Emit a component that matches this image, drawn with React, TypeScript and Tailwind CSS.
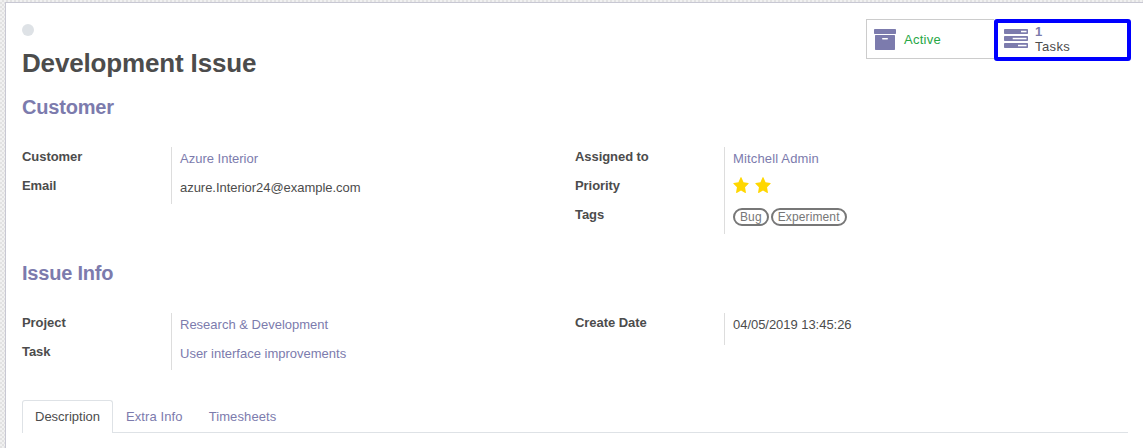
import type { ReactNode } from "react";

function ArchiveIcon() {
  return (
    <svg width="22" height="21" viewBox="0 0 22 21" fill="#7c7bad">
      <rect x="0" y="0" width="22" height="5" rx="0.7" />
      <path
        fillRule="evenodd"
        d="M1.7 6H20.3Q21 6 21 6.7V20.3Q21 21 20.3 21H1.7Q1 21 1 20.3V6.7Q1 6 1.7 6ZM8.8 9A.8.8 0 0 0 8.8 10.6H13.2A.8.8 0 0 0 13.2 9Z"
      />
    </svg>
  );
}

function TasksIcon() {
  return (
    <svg width="24" height="19" viewBox="0 0 24 19">
      <g fill="#7c7bad">
        <rect x="0" y="0" width="24" height="5" rx="0.8" />
        <rect x="0" y="7" width="24" height="5" rx="0.8" />
        <rect x="0" y="14" width="24" height="5" rx="0.8" />
      </g>
      <g fill="#fff">
        <rect x="17" y="1.8" width="5.5" height="1.5" />
        <rect x="8.7" y="8.8" width="13.8" height="1.5" />
        <rect x="14" y="15.8" width="8.5" height="1.5" />
      </g>
    </svg>
  );
}

function Star() {
  return (
    <svg width="16" height="16" viewBox="0 0 17 16" preserveAspectRatio="none" fill="#ffd700">
      <path d="M8.5 0Q8.8 0 9 .5L11.2 5.2 16.2 5.9Q17.1 6.1 16.5 6.8L12.8 10.3 13.7 15.3Q13.8 16.2 13 15.9L8.5 13.5 4 15.9Q3.2 16.2 3.3 15.3L4.2 10.3.5 6.8Q-.1 6.1.8 5.9L5.8 5.2 8 .5Q8.2 0 8.5 0Z" />
    </svg>
  );
}

function Group({ labels, tall, children }: { labels: string[]; tall?: boolean; children: ReactNode }) {
  return (
    <div className="flex w-[553px] items-start">
      <div className="w-[149px] font-bold tracking-[-0.06px]">
        {labels.map((l) => (
          <div key={l} className="h-[29px] leading-5">{l}</div>
        ))}
      </div>
      <div className={`border-l border-[#dddddd] pl-2 ${tall ? "pb-[3px]" : ""}`}>{children}</div>
    </div>
  );
}

function Tag({ children }: { children: ReactNode }) {
  return (
    <span className="h-[18px] rounded-full border-2 border-[#777777] px-[5px] text-[12px] leading-[14px] tracking-[0.12px] text-[#777777]">
      {children}
    </span>
  );
}

export default function App() {
  return (
    <div className="h-[448px] w-full overflow-hidden bg-[#eeeeee] bg-[conic-gradient(#e2e2e2_25%,#f1f1f1_0_50%,#e2e2e2_0_75%,#f1f1f1_0)] bg-[length:4px_4px] pt-[2px] pl-[5px] font-['Liberation_Sans',Arial,sans-serif] text-[13px] text-[#4c4c4c]">
      <main className="h-[446px] border-t border-l border-[#c8c8d3] bg-white pl-4">
        <header className="flex h-[88px] items-start justify-between pr-3">
          <div className="pt-[21px]">
            <div className="h-3 w-3 rounded-full bg-[#dee2e6]" />
            <h1 className="mt-[11px] text-[26px] leading-8 font-bold tracking-[-0.16px]">Development Issue</h1>
          </div>
          <div className="flex pt-4">
            <div className="flex h-10 w-[128px] items-start border border-r-0 border-[#cccccc] pt-[9px] pl-[7px] text-[#28a745]">
              <ArchiveIcon />
              <span className="pl-2 leading-[21px] tracking-[0.25px]">Active</span>
            </div>
            <div className="flex h-[42px] w-[137px] items-start rounded-[3px] border-4 border-[#0000ff] pl-[6px]">
              <div className="pt-[6px]"><TasksIcon /></div>
              <div className="pt-[1px] pl-[7px] leading-[15px]">
                <div className="font-bold text-[#7c7bad]">1</div>
                <div className="tracking-[0.4px]">Tasks</div>
              </div>
            </div>
          </div>
        </header>
        <h2 className="h-14 pt-[2px] text-[20px] leading-7 font-bold tracking-[-0.2px] text-[#7c7bad]">Customer</h2>
        <section className="flex h-[110px]">
          <Group labels={["Customer", "Email"]}>
            <div className="h-[29px] pt-[2px] leading-5 text-[#7c7bad]">Azure Interior</div>
            <div className="h-7 pt-[2px] leading-5 tracking-[-0.04px]">azure.Interior24@example.com</div>
          </Group>
          <Group labels={["Assigned to", "Priority", "Tags"]}>
            <div className="h-[29px] pt-[2px] leading-5 tracking-[0.15px] text-[#7c7bad]">Mitchell Admin</div>
            <div className="flex h-[29px] gap-[6px] pt-[1px]"><Star /><Star /></div>
            <div className="flex h-[29px] gap-[2px] pt-[3px]"><Tag>Bug</Tag><Tag>Experiment</Tag></div>
          </Group>
        </section>
        <h2 className="h-14 pt-[2px] text-[20px] leading-7 font-bold tracking-[-0.2px] text-[#7c7bad]">Issue Info</h2>
        <section className="flex h-[87px]">
          <Group labels={["Project", "Task"]}>
            <div className="h-[29px] pt-[2px] leading-5 text-[#7c7bad]">Research &amp; Development</div>
            <div className="h-7 pt-[2px] leading-5 text-[#7c7bad]">User interface improvements</div>
          </Group>
          <Group labels={["Create Date"]} tall>
            <div className="h-[29px] pt-[2px] leading-5 tracking-[-0.04px]">04/05/2019 13:45:26</div>
          </Group>
        </section>
        <nav className="mr-[15px] flex h-[33px] border-b border-[#dee2e6]">
          <div className="h-[33px] w-[91px] rounded-t-[3px] border border-b-0 border-[#dee2e6] bg-white px-3 leading-8">Description</div>
          <div className="px-[13px] leading-[34px] tracking-[0.1px] text-[#7c7bad]">Extra Info</div>
          <div className="px-[13px] leading-[34px] tracking-[0.1px] text-[#7c7bad]">Timesheets</div>
        </nav>
      </main>
    </div>
  );
}
